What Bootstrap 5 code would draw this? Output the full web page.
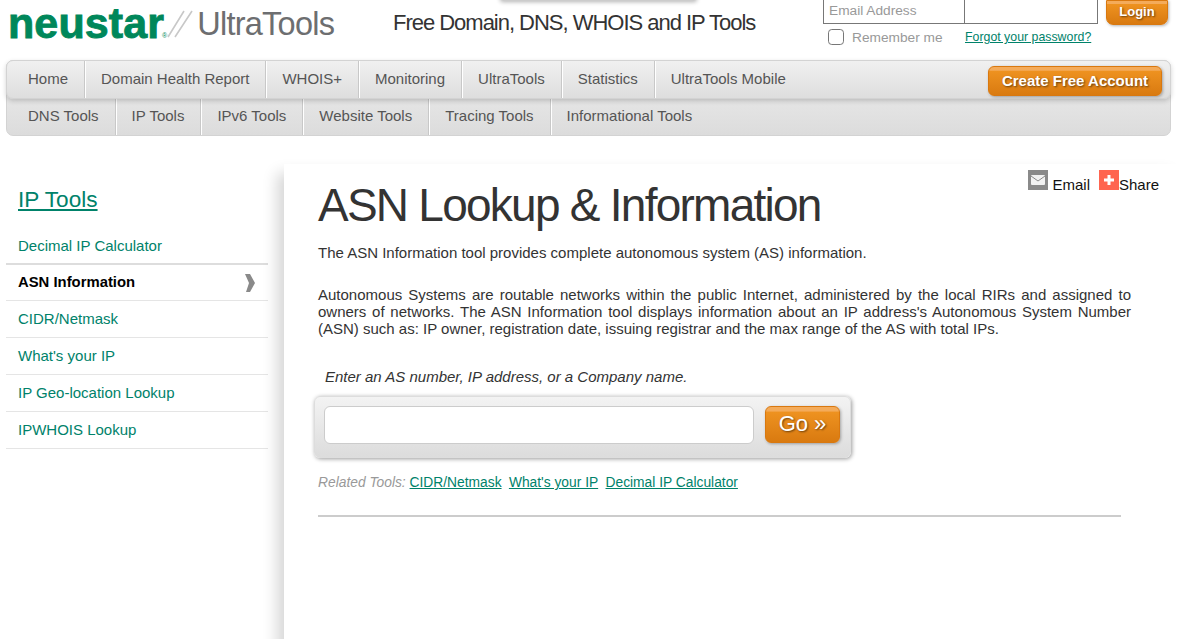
<!DOCTYPE html>
<html lang="en">

<head>
    <meta charset="UTF-8">
    <meta name="viewport" content="width=device-width, initial-scale=1.0">
    <title>ASN Lookup &amp; Information</title>
    <link href="https://cdn.jsdelivr.net/npm/bootstrap@5.3.5/dist/css/bootstrap.min.css" rel="stylesheet">
    <style>
        html, body { height: 100%; overflow: hidden; }
        body { font-family: "Liberation Sans", Arial, sans-serif; font-size: 15px; color: #333; background: #fff; }
        a { color: #00826a; }

        .top-popup { position: absolute; left: 500px; top: -6px; width: 197px; height: 7px; background: #fff; border: 1px solid #ccc; border-radius: 3px; box-shadow: 0 1px 4px rgba(0,0,0,.3); }

        .site-head { height: 60px; }
        .logo-box { width: 393px; padding: 2px 0 0 8px; height: 50px; }
        .logo-green { font-size: 43px; font-weight: 700; color: #00875a; letter-spacing: .1px; line-height: 42px; -webkit-text-stroke: .9px #00875a; }
        .logo-reg { font-size: 7px; font-weight: 400; letter-spacing: 0; -webkit-text-stroke: 0; margin: 0 -4px 0 -2px; }
        .logo-grey { font-size: 32.5px; color: #6d6e70; letter-spacing: -.75px; line-height: 44px; }
        .logo-slash { width: 26px; height: 28px; margin: 8px 4px 0 4px; }
        .tagline { width: 430px; font-size: 22px; color: #333; letter-spacing: -1.02px; padding-top: 9px; line-height: 28px; }
        .login-wrap { width: 345px; }
        .login-field { width: 142px; height: 24px; border: 1px solid #777; border-top: 0; padding: 0 5px 3px; font-size: 13.7px; color: #999; line-height: 20px; background: #fff; }
        .login-field + .login-field { width: 133px; border-left: 0; }
        .login-field::placeholder { color: #999; opacity: 1; }
        .orange-btn { border: 1px solid #d9780f; color: #fff; font-weight: 700; text-shadow: 1px 1px 2px rgba(0,0,0,.55); background: linear-gradient(#f4ab5a 0, #f4ab5a 12%, #ee9220 14%, #d97a10 100%); box-shadow: 1px 1px 3px rgba(0,0,0,.3); }
        .login-btn { width: 62px; height: 25px; margin-left: 8px; font-size: 13px; border-radius: 0 0 7px 7px; padding: 0 0 2px; }
        .remember { margin-top: 1px; }
        .remember-box { width: 16px; height: 16px; margin: 0 0 0 5px; border: 1px solid #777; border-radius: 3px; background: #fff; }
        .remember-text { font-size: 13.7px; color: #999; margin-left: 8px; width: 113px; padding-top: 2px; }
        .forgot { font-size: 12.35px; }

        .nav-shell { margin: 0 7px 0 6px; border: 1px solid #d3d3d3; border-radius: 7px; background: linear-gradient(#efefef, #dcdcdc); }
        .nav-upper { height: 39px; border-radius: 7px; box-shadow: 0 2px 5px rgba(0,0,0,.18); position: relative; margin: -1px; border: 1px solid #d3d3d3; background: linear-gradient(#f0f0f0, #dedede); }
        .nav-lower { height: 37px; border-radius: 0 0 7px 7px; }
        .bar-link { display: block; color: #555; text-decoration: none; padding: 0 16px 0 21px; border-right: 1px solid #c8c8c8; box-shadow: 1px 0 0 #fff; line-height: 36px; height: 100%; }
        .nav-lower .bar-link { padding: 0 16px; }
        .nav-lower .bar-first { padding-left: 21px; }
        .bar-plain { border-right: 0; box-shadow: none; padding-left: 16px; }
        .nav-upper .bar-next { padding-left: 16px; }
        .account-btn { width: 174px; height: 30px; margin: 5px 8px 0 0; font-size: 15px; border-radius: 6px; padding: 0; }

        .page-body { height: 503px; overflow: hidden; }
        .side-col { width: 262px; margin-left: 6px; padding-top: 49px; }
        .side-title { font-size: 22.6px; font-weight: 400; margin: 0 0 0 12px; line-height: 30px; height: 43px; }
        .side-title a { color: #00826a; }
        .side-list a, .side-list span { display: block; text-decoration: none; }
        .side-item { height: 37px; line-height: 35px; padding-left: 12px; border-bottom: 1px solid #e5e5e5; }
        .side-item a { color: #00826a; }
        .side-first { border-bottom: 2px solid #ddd; }
        .side-now { height: 36px; }
        .side-active { color: #000; font-weight: 700; font-size: 14.85px; }
        .side-chev { width: 11px; height: 18px; margin-right: 13px; }

        .main-col { margin: 28px 0 0 16px; width: 894px; height: 520px; padding: 15px 19px 0 34px; box-shadow: -7px 9px 14px rgba(0,0,0,.16); background: #fff; }
        .share-row { float: right; color: #111; margin-top: -9px; height: 24px; }
        .share-icon { width: 20px; height: 20px; display: block; }
        .share-label { line-height: 20px; padding-top: 5px; }
        .share-gap { margin: 0 9px 0 4px; }
        .main-title { font-size: 46px; font-weight: 400; color: #333; letter-spacing: -1.75px; line-height: 52px; margin: 0; }
        .main-text { width: 813px; line-height: 17px; margin: 0; text-align: justify; color: #333; }
        .first-text { margin-top: 13px; }
        .second-text { margin-top: 25px; }
        .hint-text { font-style: italic; margin: 31px 0 0 7px; line-height: 17px; color: #333; }
        .search-box { width: 537px; height: 62px; margin: 11px 0 0 -4px; padding: 9px; border: 1px solid #ddd; border-radius: 6px; background: linear-gradient(#f3f3f3, #dcdcdc); box-shadow: 1px 1px 4px rgba(0,0,0,.4); }
        .search-input { width: 430px; height: 38px; border: 1px solid #ccc; border-radius: 6px; background: #fff; }
        .go-btn { width: 75px; height: 37px; margin-left: 11px; font-size: 22px; font-weight: 400; border-radius: 6px; padding: 0 0 2px; line-height: 31px; }
        .related { margin-top: 16px; font-size: 13.8px; line-height: 18px; }
        .related em { color: #999; }
        .related a { margin-right: 3.5px; }
        .main-rule { width: 803px; height: 2px; background: #ccc; margin-top: 23px; }
    </style>
</head>

<body>
    <div class="top-popup"></div>

    <div class="site-head d-flex">
        <div class="logo-box d-flex align-items-start">
            <span class="logo-green">neustar<span class="logo-reg">®</span></span>
            <svg class="logo-slash flex-shrink-0" viewBox="0 0 26 28">
                <path d="M1 27 L17 1 M8 27 L25 1" stroke="#c8c8c8" stroke-width="1.6" fill="none" />
            </svg>
            <span class="logo-grey">UltraTools</span>
        </div>
        <div class="tagline">Free Domain, DNS, WHOIS and IP Tools</div>
        <div class="login-wrap">
            <div class="d-flex">
                <input type="text" class="login-field" placeholder="Email Address">
                <input type="password" class="login-field">
                <button class="orange-btn login-btn">Login</button>
            </div>
            <div class="remember d-flex align-items-center">
                <input type="checkbox" class="remember-box form-check-input">
                <span class="remember-text">Remember me</span>
                <a href="#" class="forgot">Forgot your password?</a>
            </div>
        </div>
    </div>

    <div class="nav-shell">
        <div class="nav-upper d-flex justify-content-between">
            <div class="d-flex">
                <a href="#" class="bar-link">Home</a>
                <a href="#" class="bar-link bar-next">Domain Health Report</a>
                <a href="#" class="bar-link bar-next">WHOIS+</a>
                <a href="#" class="bar-link bar-next">Monitoring</a>
                <a href="#" class="bar-link bar-next">UltraTools</a>
                <a href="#" class="bar-link bar-next">Statistics</a>
                <a href="#" class="bar-link bar-plain">UltraTools Mobile</a>
            </div>
            <button class="orange-btn account-btn">Create Free Account</button>
        </div>
        <div class="nav-lower d-flex">
            <a href="#" class="bar-link bar-first">DNS Tools</a>
            <a href="#" class="bar-link">IP Tools</a>
            <a href="#" class="bar-link">IPv6 Tools</a>
            <a href="#" class="bar-link">Website Tools</a>
            <a href="#" class="bar-link">Tracing Tools</a>
            <a href="#" class="bar-link bar-plain">Informational Tools</a>
        </div>
    </div>

    <div class="page-body d-flex">
        <div class="side-col flex-shrink-0">
            <h2 class="side-title"><a href="#">IP Tools</a></h2>
            <div class="side-list">
                <div class="side-item side-first"><a href="#">Decimal IP Calculator</a></div>
                <div class="side-item side-now d-flex justify-content-between align-items-center">
                    <span class="side-active">ASN Information</span>
                    <svg class="side-chev flex-shrink-0" viewBox="0 0 11 18">
                        <path d="M1 0 L6 0 L11 9 L6 18 L2 18 L5 9 Z" fill="#8a8a8a" />
                    </svg>
                </div>
                <div class="side-item"><a href="#">CIDR/Netmask</a></div>
                <div class="side-item"><a href="#">What's your IP</a></div>
                <div class="side-item"><a href="#">IP Geo-location Lookup</a></div>
                <div class="side-item"><a href="#">IPWHOIS Lookup</a></div>
            </div>
        </div>

        <div class="main-col flex-shrink-0">
            <div class="share-row d-flex">
                <svg class="share-icon" viewBox="0 0 20 20">
                    <rect width="20" height="20" fill="#8a8a8a" />
                    <rect x="3" y="5" width="14" height="10" rx="1" fill="#f2f2f2" />
                    <path d="M3 6 L10 11 L17 6" stroke="#8a8a8a" stroke-width="1" fill="none" />
                </svg>
                <span class="share-label share-gap">Email</span>
                <svg class="share-icon" viewBox="0 0 20 20">
                    <rect width="20" height="20" fill="#ff6550" />
                    <path d="M10 5 V15 M5 10 H15" stroke="#fff" stroke-width="3" />
                </svg>
                <span class="share-label">Share</span>
            </div>
            <h1 class="main-title">ASN Lookup &amp; Information</h1>
            <p class="main-text first-text">The ASN Information tool provides complete autonomous system (AS) information.</p>
            <p class="main-text second-text">Autonomous Systems are routable networks within the public Internet, administered by the local RIRs and assigned to owners of networks. The ASN Information tool displays information about an IP address's Autonomous System Number (ASN) such as: IP owner, registration date, issuing registrar and the max range of the AS with total IPs.</p>
            <p class="hint-text">Enter an AS number, IP address, or a Company name.</p>
            <div class="search-box d-flex">
                <input type="text" class="search-input">
                <button class="orange-btn go-btn">Go »</button>
            </div>
            <div class="related">
                <em>Related Tools:</em>
                <a href="#">CIDR/Netmask</a>
                <a href="#">What's your IP</a>
                <a href="#">Decimal IP Calculator</a>
            </div>
            <div class="main-rule"></div>
        </div>
    </div>

    <script src="https://cdn.jsdelivr.net/npm/bootstrap@5.3.5/dist/js/bootstrap.bundle.min.js"></script>
</body>

</html>
